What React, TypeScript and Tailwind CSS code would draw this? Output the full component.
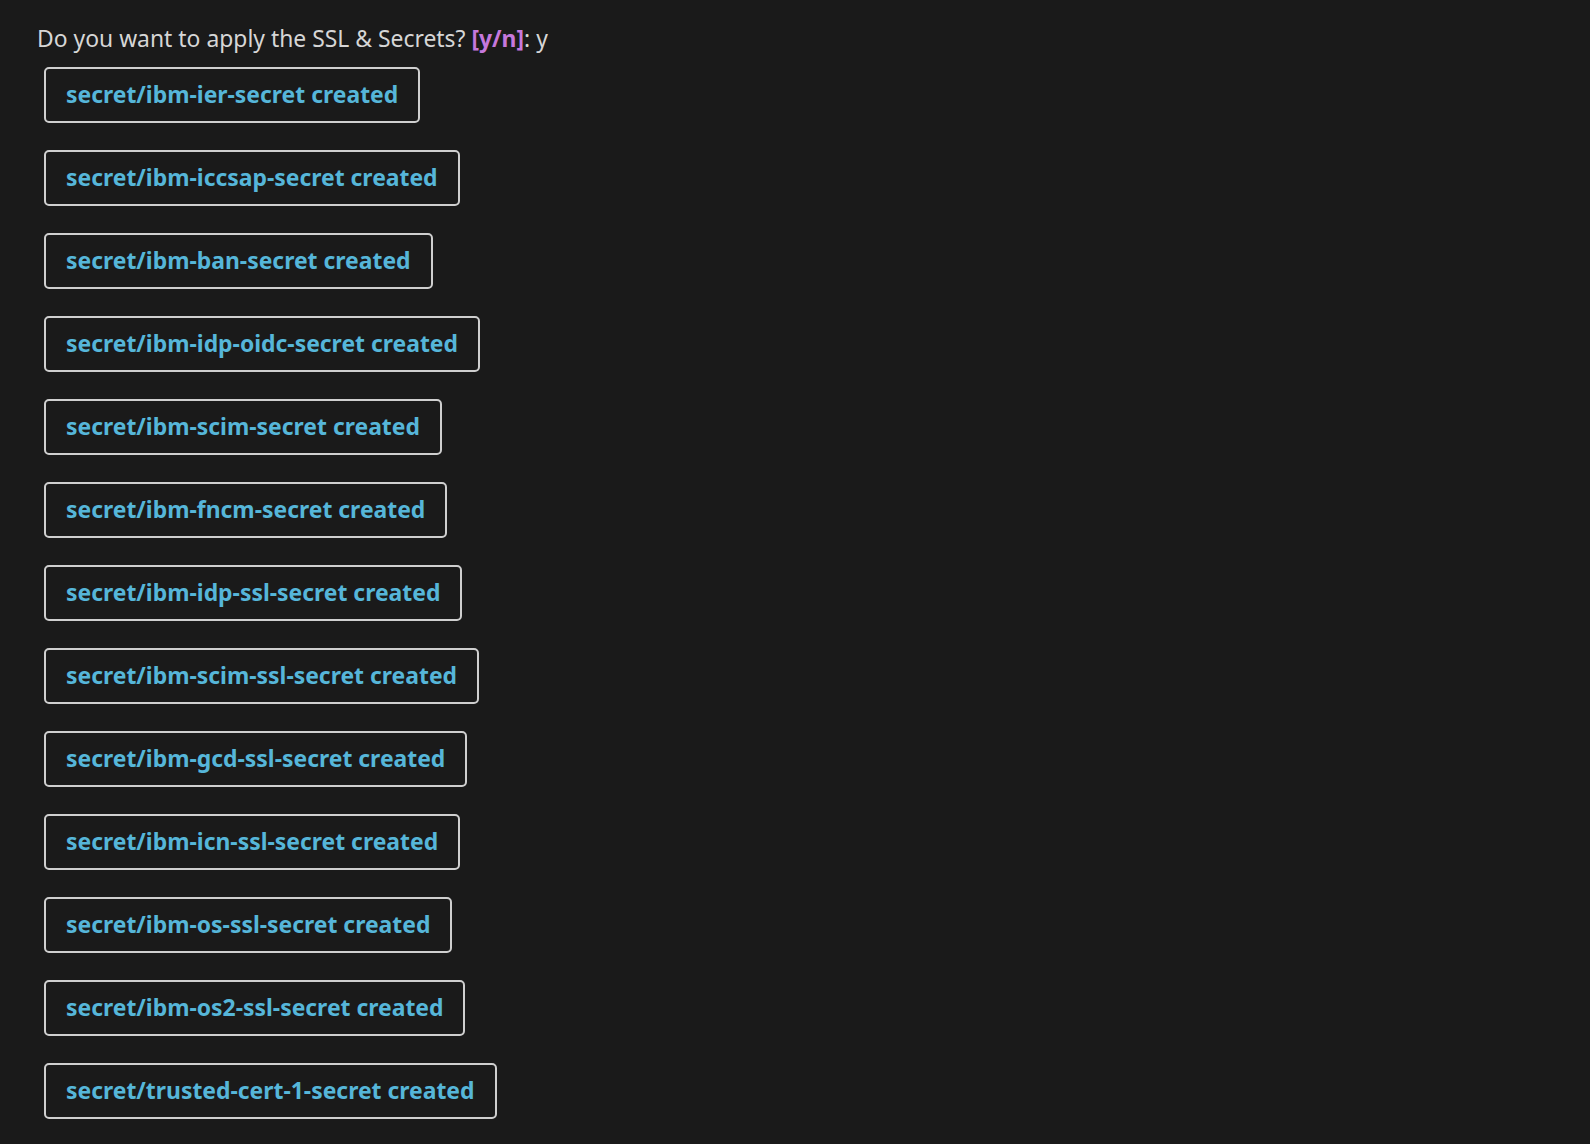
const SECRETS = [
  "ibm-ier-secret",
  "ibm-iccsap-secret",
  "ibm-ban-secret",
  "ibm-idp-oidc-secret",
  "ibm-scim-secret",
  "ibm-fncm-secret",
  "ibm-idp-ssl-secret",
  "ibm-scim-ssl-secret",
  "ibm-gcd-ssl-secret",
  "ibm-icn-ssl-secret",
  "ibm-os-ssl-secret",
  "ibm-os2-ssl-secret",
  "trusted-cert-1-secret",
]

export default function App() {
  return (
    <div className="min-h-screen bg-[#1a1a1a] pl-[37px] pt-[22px] font-['DejaVu_Sans_Mono'] text-[22.9px]">
      <div className="h-[34px] leading-[34px] text-[#d6d6d6]">
        Do you want to apply the SSL &amp; Secrets?{" "}
        <span className="font-bold text-[#c678dd]">[y/n]</span>: y
      </div>
      <div className="mt-[11px] ml-[7px] flex flex-col items-start gap-[27px]">
        {SECRETS.map((s) => (
          <div
            key={s}
            className="box-border flex h-[56px] min-h-[56px] shrink-0 items-center rounded-[5px] border-2 border-[#cfcfcf] px-[20px] leading-none font-bold text-[#56b6d9]"
          >
            secret/{s} created
          </div>
        ))}
      </div>
    </div>
  )
}
